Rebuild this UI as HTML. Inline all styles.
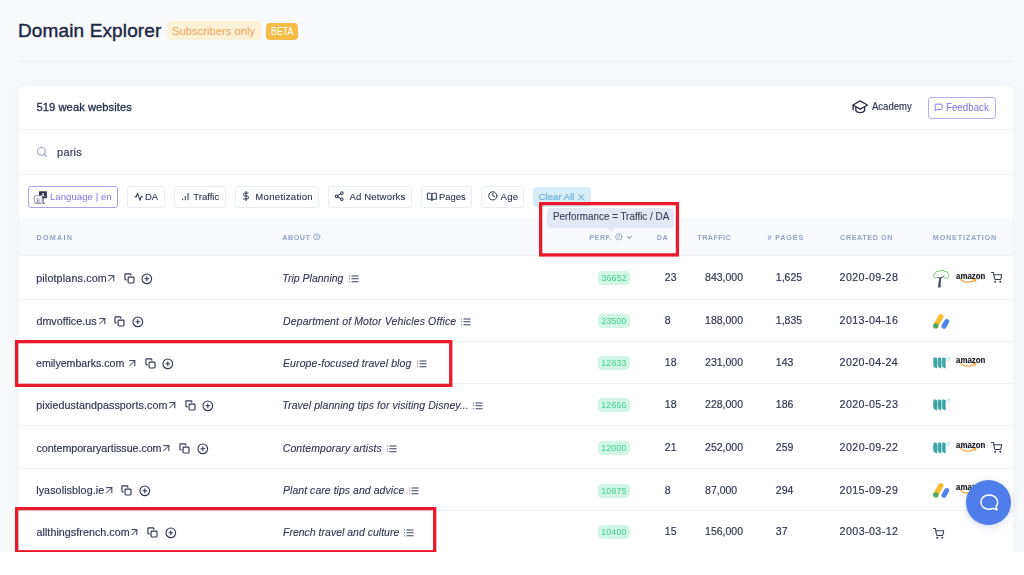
<!DOCTYPE html>
<html lang="en"><head><meta charset="utf-8"><title>Domain Explorer</title>
<style>
html,body{margin:0;padding:0;background:#fff;}
body{width:1024px;height:575px;position:relative;overflow:hidden;font-family:"Liberation Sans",sans-serif;color:#2b3550;}
.t{position:absolute;white-space:nowrap;line-height:1;transform-origin:0 0;}
.s{-webkit-text-stroke:0.17px currentColor;}
.s2{-webkit-text-stroke:0.1px currentColor;}
.b,.i{position:absolute;display:block;}
.i{overflow:visible;}
#w{position:absolute;left:0;top:0;width:1024px;height:575px;overflow:hidden;filter:blur(0.45px);}
</style></head><body><div id="w">
<svg class="i" width="0" height="0" style="left:0;top:0"><defs><linearGradient id="mvg" x1="0" x2="1" y1="0" y2="0"><stop offset="0" stop-color="#62b8b8"/><stop offset="0.6" stop-color="#3aa3a3"/><stop offset="1" stop-color="#2f9a9a"/></linearGradient></defs></svg>
<div class="b" style="left:0.00px;top:0.00px;width:1024.00px;height:552.00px;background:#f9fafc;"></div>
<span class="t" style="left:17.98px;top:21px;font-size:19.00px;letter-spacing:0.132px;color:#1c2745;-webkit-text-stroke:0.42px #1c2745;">Domain Explorer</span>
<div class="b" style="left:166.60px;top:21.00px;width:94.10px;height:19.00px;background:#fdf1d8;border-radius:4px;"></div>
<span class="t" style="left:171.99px;top:26px;font-size:11.50px;transform:scaleX(0.9767);color:#f1a558;">Subscribers only</span>
<div class="b" style="left:265.80px;top:22.90px;width:32.10px;height:17.10px;background:#f4bc49;border-radius:4px;"></div>
<span class="t" style="left:270.59px;top:26px;font-size:10.80px;transform:scaleX(0.8184);color:#ffffff;">BETA</span>
<div class="b" style="left:18.00px;top:60.60px;width:996.00px;height:1.00px;background:#eceff5;"></div>
<div class="b" style="left:19.00px;top:86.00px;width:994.00px;height:474.00px;background:#fff;border-radius:5px 5px 0 0;box-shadow:0 0 12px rgba(150,165,200,.10);"></div>
<span class="t" style="left:36.55px;top:102px;font-size:11.20px;letter-spacing:0.044px;color:#1f2a48;-webkit-text-stroke:0.3px #1f2a48;">519 weak websites</span>
<div class="b" style="left:19.00px;top:129.00px;width:994.00px;height:1.00px;background:#f0f2f8;"></div>
<div class="b" style="left:19.00px;top:173.70px;width:994.00px;height:1.00px;background:#f0f2f8;"></div>
<svg class="i" style="left:852.30px;top:99.90px;" width="16.40" height="14.00" viewBox="0 0 24 20.5"><g fill="none" stroke="#2b3045" stroke-width="2" stroke-linejoin="round" stroke-linecap="round"><path d="M12 1.3 L22.6 7.3 L12 13.3 L1.4 7.3 Z"/><path d="M5.6 10 V15.8 C7.6 19.4 16.4 19.4 18.4 15.8 V10"/><path d="M1.6 7.8 V14.2"/></g></svg>
<span class="t s" style="left:872.40px;top:102px;font-size:10.00px;transform:scaleX(0.9520);color:#30374f;">Academy</span>
<div class="b" style="left:927.70px;top:96.60px;width:68.00px;height:22.00px;border:1px solid #b9adf3;border-radius:3px;background:#fff;box-sizing:border-box;"></div>
<svg class="i" style="left:934.42px;top:103.47px;" width="9.27" height="9.27" viewBox="0 0 24 24"><g fill="none" stroke="#8878e8" stroke-width="2.59" stroke-linecap="round" stroke-linejoin="round"><path d="M21 15a2 2 0 0 1-2 2H7l-4 4V5a2 2 0 0 1 2-2h14a2 2 0 0 1 2 2z"/></g></svg>
<span class="t" style="left:946.22px;top:103px;font-size:10.00px;transform:scaleX(0.9745);color:#7f70e4;">Feedback</span>
<svg class="i" style="left:36.23px;top:146.03px;" width="11.73" height="11.73" viewBox="0 0 24 24"><g fill="none" stroke="#93a4c6" stroke-width="2.25" stroke-linecap="round" stroke-linejoin="round"><circle cx="11" cy="11" r="8"/><line x1="21" y1="21" x2="16.65" y2="16.65"/></g></svg>
<span class="t s" style="left:57.08px;top:147px;font-size:11.00px;letter-spacing:0.208px;color:#333b55;">paris</span>
<div class="b" style="left:28.10px;top:186.00px;width:89.90px;height:22.00px;border:1px solid #ab9ff2;border-radius:3px;background:#fff;box-sizing:border-box;"></div>
<svg class="i" style="left:34.10px;top:190.90px;" width="13.60" height="13.40" viewBox="0 0 27.2 26.8"><rect x="10" y="0.3" width="15.8" height="14" rx="1.4" fill="#30364f"/><path d="M18.4 14v11.2h3.8" stroke="#30364f" stroke-width="1.5" fill="none"/><rect x="0.7" y="9.5" width="15.6" height="15.6" rx="1.6" fill="#fff" stroke="#70768c" stroke-width="1.4"/><text x="17.9" y="11.3" font-size="10.5" font-family="Liberation Sans,sans-serif" font-weight="bold" fill="#fff" text-anchor="middle">A</text><text x="8.5" y="21.6" font-size="10" font-family="Liberation Sans,Noto Sans CJK SC,sans-serif" fill="#4d5369" text-anchor="middle">あ</text></svg>
<span class="t" style="left:49.93px;top:192px;font-size:9.60px;letter-spacing:0.049px;color:#8474e6;">Language | en</span>
<div class="b" style="left:126.60px;top:186.00px;width:38.00px;height:22.00px;border:1px solid #e9edf6;border-radius:3px;background:#fff;box-sizing:border-box;"></div>
<svg class="i" style="left:133.57px;top:191.87px;" width="9.47" height="9.47" viewBox="0 0 24 24"><g fill="none" stroke="#2b3550" stroke-width="2.54" stroke-linecap="round" stroke-linejoin="round"><polyline points="22 12 18 12 15 21 9 3 6 12 2 12"/></g></svg>
<span class="t s2" style="left:145.25px;top:192px;font-size:9.60px;transform:scaleX(0.9818);">DA</span>
<div class="b" style="left:174.10px;top:186.00px;width:51.60px;height:22.00px;border:1px solid #e9edf6;border-radius:3px;background:#fff;box-sizing:border-box;"></div>
<svg class="i" style="left:182.20px;top:192.90px;" width="7.00" height="7.20" viewBox="0 0 7 7.2"><g fill="#59627d"><rect x="0" y="5.4" width="1.2" height="1.8"/><rect x="2.7" y="3" width="1.2" height="4.2"/><rect x="5.4" y="0" width="1.3" height="7.2"/></g></svg>
<span class="t s2" style="left:193.31px;top:192px;font-size:9.60px;letter-spacing:-0.038px;">Traffic</span>
<div class="b" style="left:234.50px;top:186.00px;width:84.20px;height:22.00px;border:1px solid #e9edf6;border-radius:3px;background:#fff;box-sizing:border-box;"></div>
<svg class="i" style="left:241.21px;top:191.46px;" width="10.08" height="10.08" viewBox="0 0 24 24"><g fill="none" stroke="#2b3550" stroke-width="2.38" stroke-linecap="round" stroke-linejoin="round"><line x1="12" y1="1" x2="12" y2="23"/><path d="M17 5H9.5a3.5 3.5 0 0 0 0 7h5a3.5 3.5 0 0 1 0 7H6"/></g></svg>
<span class="t s2" style="left:255.33px;top:192px;font-size:9.60px;letter-spacing:0.269px;">Monetization</span>
<div class="b" style="left:327.70px;top:186.00px;width:84.00px;height:22.00px;border:1px solid #e9edf6;border-radius:3px;background:#fff;box-sizing:border-box;"></div>
<svg class="i" style="left:334.33px;top:191.08px;" width="10.44" height="10.44" viewBox="0 0 24 24"><g fill="none" stroke="#2b3550" stroke-width="2.30" stroke-linecap="round" stroke-linejoin="round"><circle cx="18" cy="5" r="3"/><circle cx="6" cy="12" r="3"/><circle cx="18" cy="19" r="3"/><line x1="8.59" y1="13.51" x2="15.42" y2="17.49"/><line x1="15.41" y1="6.51" x2="8.59" y2="10.49"/></g></svg>
<span class="t s2" style="left:349.40px;top:192px;font-size:9.60px;letter-spacing:0.150px;">Ad Networks</span>
<div class="b" style="left:420.80px;top:186.00px;width:51.10px;height:22.00px;border:1px solid #e9edf6;border-radius:3px;background:#fff;box-sizing:border-box;"></div>
<svg class="i" style="left:427.46px;top:191.81px;" width="9.78" height="9.78" viewBox="0 0 24 24"><g fill="none" stroke="#2b3550" stroke-width="2.45" stroke-linecap="round" stroke-linejoin="round"><path d="M2 3h6a4 4 0 0 1 4 4v14a3 3 0 0 0-3-3H2z"/><path d="M22 3h-6a4 4 0 0 0-4 4v14a3 3 0 0 1 3-3h7z"/></g></svg>
<span class="t s2" style="left:439.45px;top:192px;font-size:9.60px;transform:scaleX(0.9766);">Pages</span>
<div class="b" style="left:481.30px;top:186.00px;width:43.20px;height:22.00px;border:1px solid #e9edf6;border-radius:3px;background:#fff;box-sizing:border-box;"></div>
<svg class="i" style="left:487.96px;top:191.41px;" width="9.78" height="9.78" viewBox="0 0 24 24"><g fill="none" stroke="#2b3550" stroke-width="2.45" stroke-linecap="round" stroke-linejoin="round"><circle cx="12" cy="12" r="10"/><polyline points="12 6 12 12 16 14"/></g></svg>
<span class="t s2" style="left:500.40px;top:192px;font-size:9.60px;letter-spacing:0.372px;">Age</span>
<div class="b" style="left:533.00px;top:187.00px;width:57.80px;height:20.30px;background:#d7eef8;border-radius:4px;"></div>
<span class="t" style="left:538.42px;top:192px;font-size:9.60px;letter-spacing:0.012px;color:#55a8dd;">Clear All</span>
<svg class="i" style="left:575.85px;top:192.40px;" width="10.60" height="10.60" viewBox="0 0 24 24"><g fill="none" stroke="#55a8dd" stroke-width="2.15" stroke-linecap="round" stroke-linejoin="round"><line x1="18" y1="6" x2="6" y2="18"/><line x1="6" y1="6" x2="18" y2="18"/></g></svg>
<div class="b" style="left:19.00px;top:219.00px;width:994.00px;height:36.50px;background:#f9fafd;border-top:1px solid #f3f5fa;box-sizing:border-box;"></div>
<div class="b" style="left:19.00px;top:255.30px;width:994.00px;height:1.00px;background:#eef1f8;"></div>
<span class="t" style="left:36.43px;top:234px;font-size:7.20px;letter-spacing:1.268px;color:#93a2c9;font-weight:bold;">DOMAIN</span>
<span class="t" style="left:282.32px;top:234px;font-size:7.20px;letter-spacing:0.489px;color:#93a2c9;font-weight:bold;">ABOUT</span>
<svg class="i" style="left:312.92px;top:233.22px;" width="7.56" height="7.56" viewBox="0 0 24 24"><g fill="none" stroke="#93a2c9" stroke-width="2.86" stroke-linecap="round" stroke-linejoin="round"><circle cx="12" cy="12" r="10"/><path d="M9.09 9a3 3 0 0 1 5.83 1c0 2-3 3-3 3"/><line x1="12" y1="17" x2="12.01" y2="17"/></g></svg>
<span class="t" style="left:589.23px;top:234px;font-size:7.20px;letter-spacing:0.540px;color:#93a2c9;font-weight:bold;">PERF.</span>
<svg class="i" style="left:614.54px;top:233.19px;" width="7.62" height="7.62" viewBox="0 0 24 24"><g fill="none" stroke="#93a2c9" stroke-width="2.83" stroke-linecap="round" stroke-linejoin="round"><circle cx="12" cy="12" r="10"/><path d="M9.09 9a3 3 0 0 1 5.83 1c0 2-3 3-3 3"/><line x1="12" y1="17" x2="12.01" y2="17"/></g></svg>
<svg class="i" style="left:624.65px;top:232.60px;" width="8.60" height="8.60" viewBox="0 0 24 24"><g fill="none" stroke="#93a2c9" stroke-width="3.07" stroke-linecap="round" stroke-linejoin="round"><polyline points="6 9 12 15 18 9"/></g></svg>
<span class="t" style="left:656.73px;top:234px;font-size:7.20px;letter-spacing:0.680px;color:#93a2c9;font-weight:bold;">DA</span>
<span class="t" style="left:697.33px;top:234px;font-size:7.20px;letter-spacing:0.429px;color:#93a2c9;font-weight:bold;">TRAFFIC</span>
<span class="t" style="left:767.59px;top:234px;font-size:7.20px;letter-spacing:0.831px;color:#93a2c9;font-weight:bold;"># PAGES</span>
<span class="t" style="left:840.11px;top:234px;font-size:7.20px;letter-spacing:0.589px;color:#93a2c9;font-weight:bold;">CREATED ON</span>
<span class="t" style="left:932.83px;top:234px;font-size:7.20px;letter-spacing:0.826px;color:#93a2c9;font-weight:bold;">MONETIZATION</span>
<div class="b" style="left:547.00px;top:208.00px;width:127.20px;height:20.10px;background:#e2e8f5;border-radius:4px;"></div>
<div class="b" style="left:606.5px;top:228px;width:0;height:0;border-left:4px solid transparent;border-right:4px solid transparent;border-top:4.5px solid #e2e8f5;"></div>
<span class="t" style="left:552.51px;top:212px;font-size:10.00px;transform:scaleX(0.9855);color:#3a4258;-webkit-text-stroke:0.12px #3a4258;">Performance = Traffic / DA</span>
<div class="b" style="left:19.00px;top:298.80px;width:994.00px;height:1.00px;background:#f0f2f8;"></div>
<span class="t s" style="left:36.20px;top:273px;font-size:10.70px;letter-spacing:0.166px;color:#2d3550;">pilotplans.com</span>
<svg class="i" style="left:105.46px;top:271.56px;" width="12.48" height="12.48" viewBox="0 0 24 24"><g fill="none" stroke="#2d3550" stroke-width="1.92" stroke-linecap="round" stroke-linejoin="round"><line x1="7" y1="17" x2="17" y2="7"/><polyline points="7 7 17 7 17 17"/></g></svg>
<svg class="i" style="left:123.94px;top:273.49px;" width="10.92" height="10.92" viewBox="0 0 24 24"><g fill="none" stroke="#2f3650" stroke-width="2.53" stroke-linecap="round" stroke-linejoin="round"><rect x="9" y="9" width="13" height="13" rx="2" ry="2"/><path d="M5 15H4a2 2 0 0 1-2-2V4a2 2 0 0 1 2-2h9a2 2 0 0 1 2 2v1"/></g></svg>
<svg class="i" style="left:141.43px;top:273.33px;" width="11.64" height="11.64" viewBox="0 0 24 24"><g fill="none" stroke="#2f3650" stroke-width="2.27" stroke-linecap="round" stroke-linejoin="round"><circle cx="12" cy="12" r="10"/><line x1="12" y1="8" x2="12" y2="16"/><line x1="8" y1="12" x2="16" y2="12"/></g></svg>
<span class="t s2" style="left:282.36px;top:273px;font-size:10.50px;color:#2f3650;font-style:italic;">Trip Planning</span>
<svg class="i" style="left:347.77px;top:272.87px;" width="11.67" height="11.67" viewBox="0 0 24 24"><g fill="none" stroke="#3b4460" stroke-width="2.06" stroke-linecap="round" stroke-linejoin="round"><line x1="8" y1="6" x2="21" y2="6"/><line x1="8" y1="12" x2="21" y2="12"/><line x1="8" y1="18" x2="21" y2="18"/><line x1="3" y1="6" x2="3.01" y2="6"/><line x1="3" y1="12" x2="3.01" y2="12"/><line x1="3" y1="18" x2="3.01" y2="18"/></g></svg>
<div class="b" style="left:597.80px;top:271.20px;width:32.20px;height:13.80px;background:#d2f6e5;border-radius:4.5px;"></div>
<span class="t" style="left:601.50px;top:274px;font-size:8.80px;letter-spacing:0.157px;color:#42d092;">36652</span>
<span class="t s" style="left:664.80px;top:272px;font-size:10.50px;color:#2d3550;">23</span>
<span class="t s" style="left:705.10px;top:272px;font-size:10.50px;color:#2d3550;">843,000</span>
<span class="t s" style="left:775.80px;top:272px;font-size:10.50px;color:#2d3550;">1,625</span>
<span class="t s" style="left:839.57px;top:272px;font-size:10.70px;letter-spacing:0.404px;color:#2d3550;">2020-09-28</span>
<svg class="i" style="left:933.00px;top:269.50px;" width="16.40" height="17.60" viewBox="0 0 16.4 17.6"><path d="M3 8.2 C0.4 8.4 -0.2 5.2 1.8 4.3 C1.4 2 4 0.6 5.8 1.6 C7.4 -0.2 10.6 0.1 11.6 1.6 C13.6 0.9 15.4 2.6 14.8 4.3 C17 5.2 16 8.2 13.6 7.6 C13 8.6 11.6 8.6 11 7.9" fill="none" stroke="#6cc468" stroke-width="0.95" stroke-linecap="round"/><path d="M5 17.4 L7.7 17.4 C7.5 13.6 7.8 10.6 8.5 8.3 C10 7.4 11.5 6.2 12.7 4.7 C11 6 9 6.9 7 7.5 C5.5 7.5 4 7.2 2.9 6.7 C4 7.7 5.3 8.2 6.4 8.4 C5.7 11.2 5.2 14.2 5 17.4 Z" fill="#424a5c"/></svg>
<span class="t" style="left:955.76px;top:272px;font-size:9.30px;transform:scaleX(0.8472);color:#20232a;font-weight:bold;-webkit-text-stroke:0.2px #20232a;">amazon</span>
<svg class="i" style="left:959.60px;top:278.80px;" width="17.00" height="4.40" viewBox="0 0 17 4.4"><path d="M0.6 0.6 C4.5 3.9 10.5 4 15 1.3" fill="none" stroke="#f6a12d" stroke-width="1.15" stroke-linecap="round"/><path d="M13.3 0.5 L16.2 0.5 L15.3 3" fill="none" stroke="#f6a12d" stroke-width="0.9" stroke-linecap="round" stroke-linejoin="round"/></svg>
<svg class="i" style="left:990.82px;top:272.30px;" width="11.16" height="11.16" viewBox="0 0 24 24"><g fill="none" stroke="#343b52" stroke-width="2.26" stroke-linecap="round" stroke-linejoin="round"><circle cx="9" cy="21" r="1"/><circle cx="20" cy="21" r="1"/><path d="M1 1h4l2.68 13.39a2 2 0 0 0 2 1.61h9.72a2 2 0 0 0 2-1.61L23 6H6"/></g></svg>
<div class="b" style="left:19.00px;top:341.00px;width:994.00px;height:1.00px;background:#f0f2f8;"></div>
<span class="t s" style="left:36.47px;top:316px;font-size:10.70px;letter-spacing:0.021px;color:#2d3550;">dmvoffice.us</span>
<svg class="i" style="left:95.56px;top:314.56px;" width="12.48" height="12.48" viewBox="0 0 24 24"><g fill="none" stroke="#2d3550" stroke-width="1.92" stroke-linecap="round" stroke-linejoin="round"><line x1="7" y1="17" x2="17" y2="7"/><polyline points="7 7 17 7 17 17"/></g></svg>
<svg class="i" style="left:114.24px;top:316.49px;" width="10.92" height="10.92" viewBox="0 0 24 24"><g fill="none" stroke="#2f3650" stroke-width="2.53" stroke-linecap="round" stroke-linejoin="round"><rect x="9" y="9" width="13" height="13" rx="2" ry="2"/><path d="M5 15H4a2 2 0 0 1-2-2V4a2 2 0 0 1 2-2h9a2 2 0 0 1 2 2v1"/></g></svg>
<svg class="i" style="left:131.53px;top:316.33px;" width="11.64" height="11.64" viewBox="0 0 24 24"><g fill="none" stroke="#2f3650" stroke-width="2.27" stroke-linecap="round" stroke-linejoin="round"><circle cx="12" cy="12" r="10"/><line x1="12" y1="8" x2="12" y2="16"/><line x1="8" y1="12" x2="16" y2="12"/></g></svg>
<span class="t s2" style="left:282.99px;top:316px;font-size:10.50px;letter-spacing:0.128px;color:#2f3650;font-style:italic;">Department of Motor Vehicles Office</span>
<svg class="i" style="left:459.67px;top:315.87px;" width="11.67" height="11.67" viewBox="0 0 24 24"><g fill="none" stroke="#3b4460" stroke-width="2.06" stroke-linecap="round" stroke-linejoin="round"><line x1="8" y1="6" x2="21" y2="6"/><line x1="8" y1="12" x2="21" y2="12"/><line x1="8" y1="18" x2="21" y2="18"/><line x1="3" y1="6" x2="3.01" y2="6"/><line x1="3" y1="12" x2="3.01" y2="12"/><line x1="3" y1="18" x2="3.01" y2="18"/></g></svg>
<div class="b" style="left:597.80px;top:314.20px;width:32.20px;height:13.80px;background:#d2f6e5;border-radius:4.5px;"></div>
<span class="t" style="left:601.41px;top:317px;font-size:8.80px;letter-spacing:0.146px;color:#42d092;">23500</span>
<span class="t s" style="left:664.80px;top:315px;font-size:10.50px;color:#2d3550;">8</span>
<span class="t s" style="left:705.10px;top:315px;font-size:10.50px;color:#2d3550;">188,000</span>
<span class="t s" style="left:775.80px;top:315px;font-size:10.50px;color:#2d3550;">1,835</span>
<span class="t s" style="left:839.57px;top:315px;font-size:10.70px;letter-spacing:0.404px;color:#2d3550;">2013-04-16</span>
<svg class="i" style="left:932.90px;top:313.70px;" width="16.40" height="15.00" viewBox="0 0 16.4 15"><line x1="7.9" y1="2.6" x2="3.3" y2="10.6" stroke="#f8bd2d" stroke-width="5.1" stroke-linecap="round"/><line x1="13.7" y1="7.5" x2="11" y2="12.3" stroke="#4f86ec" stroke-width="5" stroke-linecap="round"/><circle cx="2.8" cy="11.9" r="2.7" fill="#52a95a"/></svg>
<div class="b" style="left:19.00px;top:383.10px;width:994.00px;height:1.00px;background:#f0f2f8;"></div>
<span class="t s" style="left:36.48px;top:358px;font-size:10.70px;transform:scaleX(0.9902);color:#2d3550;">emilyembarks.com</span>
<svg class="i" style="left:125.66px;top:356.56px;" width="12.48" height="12.48" viewBox="0 0 24 24"><g fill="none" stroke="#2d3550" stroke-width="1.92" stroke-linecap="round" stroke-linejoin="round"><line x1="7" y1="17" x2="17" y2="7"/><polyline points="7 7 17 7 17 17"/></g></svg>
<svg class="i" style="left:144.54px;top:358.49px;" width="10.92" height="10.92" viewBox="0 0 24 24"><g fill="none" stroke="#2f3650" stroke-width="2.53" stroke-linecap="round" stroke-linejoin="round"><rect x="9" y="9" width="13" height="13" rx="2" ry="2"/><path d="M5 15H4a2 2 0 0 1-2-2V4a2 2 0 0 1 2-2h9a2 2 0 0 1 2 2v1"/></g></svg>
<svg class="i" style="left:161.93px;top:358.33px;" width="11.64" height="11.64" viewBox="0 0 24 24"><g fill="none" stroke="#2f3650" stroke-width="2.27" stroke-linecap="round" stroke-linejoin="round"><circle cx="12" cy="12" r="10"/><line x1="12" y1="8" x2="12" y2="16"/><line x1="8" y1="12" x2="16" y2="12"/></g></svg>
<span class="t s2" style="left:282.99px;top:358px;font-size:10.50px;letter-spacing:0.114px;color:#2f3650;font-style:italic;">Europe-focused travel blog</span>
<svg class="i" style="left:415.57px;top:357.87px;" width="11.67" height="11.67" viewBox="0 0 24 24"><g fill="none" stroke="#3b4460" stroke-width="2.06" stroke-linecap="round" stroke-linejoin="round"><line x1="8" y1="6" x2="21" y2="6"/><line x1="8" y1="12" x2="21" y2="12"/><line x1="8" y1="18" x2="21" y2="18"/><line x1="3" y1="6" x2="3.01" y2="6"/><line x1="3" y1="12" x2="3.01" y2="12"/><line x1="3" y1="18" x2="3.01" y2="18"/></g></svg>
<div class="b" style="left:597.80px;top:356.20px;width:32.20px;height:13.80px;background:#d2f6e5;border-radius:4.5px;"></div>
<span class="t" style="left:601.19px;top:359px;font-size:8.80px;letter-spacing:0.212px;color:#42d092;">12833</span>
<span class="t s" style="left:664.80px;top:357px;font-size:10.50px;color:#2d3550;">18</span>
<span class="t s" style="left:705.10px;top:357px;font-size:10.50px;color:#2d3550;">231,000</span>
<span class="t s" style="left:775.80px;top:357px;font-size:10.50px;color:#2d3550;">143</span>
<span class="t s" style="left:839.57px;top:357px;font-size:10.70px;letter-spacing:0.392px;color:#2d3550;">2020-04-24</span>
<svg class="i" style="left:932.70px;top:356.90px;" width="17.10" height="11.50" viewBox="0 0 17.1 11.5"><path d="M1.00 0.2 C-0.35 2.6 -0.35 7.4 0.70 9.9 L3.95 11.4 L3.95 0.9 Z" fill="url(#mvg)"/><path d="M5.30 0.2 C3.95 2.6 3.95 7.4 5.00 9.9 L8.25 11.4 L8.25 0.9 Z" fill="url(#mvg)"/><path d="M9.60 0.2 C8.25 2.6 8.25 7.4 9.30 9.9 L12.55 11.4 L12.55 0.9 Z" fill="url(#mvg)"/><ellipse cx="15.4" cy="1.9" rx="1.3" ry="1.7" transform="rotate(28 15.4 1.9)" fill="none" stroke="#86c6d2" stroke-width="0.65"/></svg>
<span class="t" style="left:955.76px;top:356px;font-size:9.30px;transform:scaleX(0.8472);color:#20232a;font-weight:bold;-webkit-text-stroke:0.2px #20232a;">amazon</span>
<svg class="i" style="left:959.60px;top:362.80px;" width="17.00" height="4.40" viewBox="0 0 17 4.4"><path d="M0.6 0.6 C4.5 3.9 10.5 4 15 1.3" fill="none" stroke="#f6a12d" stroke-width="1.15" stroke-linecap="round"/><path d="M13.3 0.5 L16.2 0.5 L15.3 3" fill="none" stroke="#f6a12d" stroke-width="0.9" stroke-linecap="round" stroke-linejoin="round"/></svg>
<div class="b" style="left:19.00px;top:424.80px;width:994.00px;height:1.00px;background:#f0f2f8;"></div>
<span class="t s" style="left:36.20px;top:400px;font-size:10.70px;letter-spacing:0.067px;color:#2d3550;">pixiedustandpassports.com</span>
<svg class="i" style="left:165.86px;top:398.56px;" width="12.48" height="12.48" viewBox="0 0 24 24"><g fill="none" stroke="#2d3550" stroke-width="1.92" stroke-linecap="round" stroke-linejoin="round"><line x1="7" y1="17" x2="17" y2="7"/><polyline points="7 7 17 7 17 17"/></g></svg>
<svg class="i" style="left:184.64px;top:400.49px;" width="10.92" height="10.92" viewBox="0 0 24 24"><g fill="none" stroke="#2f3650" stroke-width="2.53" stroke-linecap="round" stroke-linejoin="round"><rect x="9" y="9" width="13" height="13" rx="2" ry="2"/><path d="M5 15H4a2 2 0 0 1-2-2V4a2 2 0 0 1 2-2h9a2 2 0 0 1 2 2v1"/></g></svg>
<svg class="i" style="left:201.93px;top:400.33px;" width="11.64" height="11.64" viewBox="0 0 24 24"><g fill="none" stroke="#2f3650" stroke-width="2.27" stroke-linecap="round" stroke-linejoin="round"><circle cx="12" cy="12" r="10"/><line x1="12" y1="8" x2="12" y2="16"/><line x1="8" y1="12" x2="16" y2="12"/></g></svg>
<span class="t s2" style="left:282.36px;top:400px;font-size:10.50px;letter-spacing:0.071px;color:#2f3650;font-style:italic;">Travel planning tips for visiting Disney...</span>
<svg class="i" style="left:471.97px;top:399.87px;" width="11.67" height="11.67" viewBox="0 0 24 24"><g fill="none" stroke="#3b4460" stroke-width="2.06" stroke-linecap="round" stroke-linejoin="round"><line x1="8" y1="6" x2="21" y2="6"/><line x1="8" y1="12" x2="21" y2="12"/><line x1="8" y1="18" x2="21" y2="18"/><line x1="3" y1="6" x2="3.01" y2="6"/><line x1="3" y1="12" x2="3.01" y2="12"/><line x1="3" y1="18" x2="3.01" y2="18"/></g></svg>
<div class="b" style="left:597.80px;top:398.20px;width:32.20px;height:13.80px;background:#d2f6e5;border-radius:4.5px;"></div>
<span class="t" style="left:601.19px;top:401px;font-size:8.80px;letter-spacing:0.212px;color:#42d092;">12666</span>
<span class="t s" style="left:664.80px;top:399px;font-size:10.50px;color:#2d3550;">18</span>
<span class="t s" style="left:705.10px;top:399px;font-size:10.50px;color:#2d3550;">228,000</span>
<span class="t s" style="left:775.80px;top:399px;font-size:10.50px;color:#2d3550;">186</span>
<span class="t s" style="left:839.57px;top:399px;font-size:10.70px;letter-spacing:0.404px;color:#2d3550;">2020-05-23</span>
<svg class="i" style="left:932.70px;top:398.80px;" width="17.10" height="11.50" viewBox="0 0 17.1 11.5"><path d="M1.00 0.2 C-0.35 2.6 -0.35 7.4 0.70 9.9 L3.95 11.4 L3.95 0.9 Z" fill="url(#mvg)"/><path d="M5.30 0.2 C3.95 2.6 3.95 7.4 5.00 9.9 L8.25 11.4 L8.25 0.9 Z" fill="url(#mvg)"/><path d="M9.60 0.2 C8.25 2.6 8.25 7.4 9.30 9.9 L12.55 11.4 L12.55 0.9 Z" fill="url(#mvg)"/><ellipse cx="15.4" cy="1.9" rx="1.3" ry="1.7" transform="rotate(28 15.4 1.9)" fill="none" stroke="#86c6d2" stroke-width="0.65"/></svg>
<div class="b" style="left:19.00px;top:467.90px;width:994.00px;height:1.00px;background:#f0f2f8;"></div>
<span class="t s" style="left:36.47px;top:443px;font-size:10.70px;letter-spacing:-0.038px;color:#2d3550;">contemporaryartissue.com</span>
<svg class="i" style="left:160.16px;top:441.56px;" width="12.48" height="12.48" viewBox="0 0 24 24"><g fill="none" stroke="#2d3550" stroke-width="1.92" stroke-linecap="round" stroke-linejoin="round"><line x1="7" y1="17" x2="17" y2="7"/><polyline points="7 7 17 7 17 17"/></g></svg>
<svg class="i" style="left:179.24px;top:443.49px;" width="10.92" height="10.92" viewBox="0 0 24 24"><g fill="none" stroke="#2f3650" stroke-width="2.53" stroke-linecap="round" stroke-linejoin="round"><rect x="9" y="9" width="13" height="13" rx="2" ry="2"/><path d="M5 15H4a2 2 0 0 1-2-2V4a2 2 0 0 1 2-2h9a2 2 0 0 1 2 2v1"/></g></svg>
<svg class="i" style="left:196.63px;top:443.33px;" width="11.64" height="11.64" viewBox="0 0 24 24"><g fill="none" stroke="#2f3650" stroke-width="2.27" stroke-linecap="round" stroke-linejoin="round"><circle cx="12" cy="12" r="10"/><line x1="12" y1="8" x2="12" y2="16"/><line x1="8" y1="12" x2="16" y2="12"/></g></svg>
<span class="t s2" style="left:282.72px;top:443px;font-size:10.50px;letter-spacing:0.081px;color:#2f3650;font-style:italic;">Contemporary artists</span>
<svg class="i" style="left:385.77px;top:442.87px;" width="11.67" height="11.67" viewBox="0 0 24 24"><g fill="none" stroke="#3b4460" stroke-width="2.06" stroke-linecap="round" stroke-linejoin="round"><line x1="8" y1="6" x2="21" y2="6"/><line x1="8" y1="12" x2="21" y2="12"/><line x1="8" y1="18" x2="21" y2="18"/><line x1="3" y1="6" x2="3.01" y2="6"/><line x1="3" y1="12" x2="3.01" y2="12"/><line x1="3" y1="18" x2="3.01" y2="18"/></g></svg>
<div class="b" style="left:597.80px;top:441.20px;width:32.20px;height:13.80px;background:#d2f6e5;border-radius:4.5px;"></div>
<span class="t" style="left:601.19px;top:444px;font-size:8.80px;letter-spacing:0.201px;color:#42d092;">12000</span>
<span class="t s" style="left:664.80px;top:442px;font-size:10.50px;color:#2d3550;">21</span>
<span class="t s" style="left:705.10px;top:442px;font-size:10.50px;color:#2d3550;">252,000</span>
<span class="t s" style="left:775.80px;top:442px;font-size:10.50px;color:#2d3550;">259</span>
<span class="t s" style="left:839.57px;top:442px;font-size:10.70px;letter-spacing:0.415px;color:#2d3550;">2020-09-22</span>
<svg class="i" style="left:932.70px;top:441.80px;" width="17.10" height="11.50" viewBox="0 0 17.1 11.5"><path d="M1.00 0.2 C-0.35 2.6 -0.35 7.4 0.70 9.9 L3.95 11.4 L3.95 0.9 Z" fill="url(#mvg)"/><path d="M5.30 0.2 C3.95 2.6 3.95 7.4 5.00 9.9 L8.25 11.4 L8.25 0.9 Z" fill="url(#mvg)"/><path d="M9.60 0.2 C8.25 2.6 8.25 7.4 9.30 9.9 L12.55 11.4 L12.55 0.9 Z" fill="url(#mvg)"/><ellipse cx="15.4" cy="1.9" rx="1.3" ry="1.7" transform="rotate(28 15.4 1.9)" fill="none" stroke="#86c6d2" stroke-width="0.65"/></svg>
<span class="t" style="left:955.76px;top:441px;font-size:9.30px;transform:scaleX(0.8472);color:#20232a;font-weight:bold;-webkit-text-stroke:0.2px #20232a;">amazon</span>
<svg class="i" style="left:959.60px;top:447.80px;" width="17.00" height="4.40" viewBox="0 0 17 4.4"><path d="M0.6 0.6 C4.5 3.9 10.5 4 15 1.3" fill="none" stroke="#f6a12d" stroke-width="1.15" stroke-linecap="round"/><path d="M13.3 0.5 L16.2 0.5 L15.3 3" fill="none" stroke="#f6a12d" stroke-width="0.9" stroke-linecap="round" stroke-linejoin="round"/></svg>
<svg class="i" style="left:990.82px;top:442.30px;" width="11.16" height="11.16" viewBox="0 0 24 24"><g fill="none" stroke="#343b52" stroke-width="2.26" stroke-linecap="round" stroke-linejoin="round"><circle cx="9" cy="21" r="1"/><circle cx="20" cy="21" r="1"/><path d="M1 1h4l2.68 13.39a2 2 0 0 0 2 1.61h9.72a2 2 0 0 0 2-1.61L23 6H6"/></g></svg>
<div class="b" style="left:19.00px;top:509.80px;width:994.00px;height:1.00px;background:#f0f2f8;"></div>
<span class="t s" style="left:36.20px;top:485px;font-size:10.70px;letter-spacing:0.105px;color:#2d3550;">lyasolisblog.ie</span>
<svg class="i" style="left:102.76px;top:483.56px;" width="12.48" height="12.48" viewBox="0 0 24 24"><g fill="none" stroke="#2d3550" stroke-width="1.92" stroke-linecap="round" stroke-linejoin="round"><line x1="7" y1="17" x2="17" y2="7"/><polyline points="7 7 17 7 17 17"/></g></svg>
<svg class="i" style="left:121.24px;top:485.49px;" width="10.92" height="10.92" viewBox="0 0 24 24"><g fill="none" stroke="#2f3650" stroke-width="2.53" stroke-linecap="round" stroke-linejoin="round"><rect x="9" y="9" width="13" height="13" rx="2" ry="2"/><path d="M5 15H4a2 2 0 0 1-2-2V4a2 2 0 0 1 2-2h9a2 2 0 0 1 2 2v1"/></g></svg>
<svg class="i" style="left:138.53px;top:485.33px;" width="11.64" height="11.64" viewBox="0 0 24 24"><g fill="none" stroke="#2f3650" stroke-width="2.27" stroke-linecap="round" stroke-linejoin="round"><circle cx="12" cy="12" r="10"/><line x1="12" y1="8" x2="12" y2="16"/><line x1="8" y1="12" x2="16" y2="12"/></g></svg>
<span class="t s2" style="left:282.99px;top:485px;font-size:10.50px;letter-spacing:0.042px;color:#2f3650;font-style:italic;">Plant care tips and advice</span>
<svg class="i" style="left:408.37px;top:484.87px;" width="11.67" height="11.67" viewBox="0 0 24 24"><g fill="none" stroke="#3b4460" stroke-width="2.06" stroke-linecap="round" stroke-linejoin="round"><line x1="8" y1="6" x2="21" y2="6"/><line x1="8" y1="12" x2="21" y2="12"/><line x1="8" y1="18" x2="21" y2="18"/><line x1="3" y1="6" x2="3.01" y2="6"/><line x1="3" y1="12" x2="3.01" y2="12"/><line x1="3" y1="18" x2="3.01" y2="18"/></g></svg>
<div class="b" style="left:597.80px;top:484.20px;width:32.20px;height:13.80px;background:#d2f6e5;border-radius:4.5px;"></div>
<span class="t" style="left:601.19px;top:487px;font-size:8.80px;letter-spacing:0.212px;color:#42d092;">10875</span>
<span class="t s" style="left:664.80px;top:485px;font-size:10.50px;color:#2d3550;">8</span>
<span class="t s" style="left:705.10px;top:485px;font-size:10.50px;color:#2d3550;">87,000</span>
<span class="t s" style="left:775.80px;top:485px;font-size:10.50px;color:#2d3550;">294</span>
<span class="t s" style="left:839.57px;top:485px;font-size:10.70px;letter-spacing:0.410px;color:#2d3550;">2015-09-29</span>
<svg class="i" style="left:932.90px;top:483.30px;" width="16.40" height="15.00" viewBox="0 0 16.4 15"><line x1="7.9" y1="2.6" x2="3.3" y2="10.6" stroke="#f8bd2d" stroke-width="5.1" stroke-linecap="round"/><line x1="13.7" y1="7.5" x2="11" y2="12.3" stroke="#4f86ec" stroke-width="5" stroke-linecap="round"/><circle cx="2.8" cy="11.9" r="2.7" fill="#52a95a"/></svg>
<span class="t" style="left:955.76px;top:483px;font-size:9.30px;transform:scaleX(0.8472);color:#20232a;font-weight:bold;-webkit-text-stroke:0.2px #20232a;">amazon</span>
<svg class="i" style="left:959.60px;top:489.80px;" width="17.00" height="4.40" viewBox="0 0 17 4.4"><path d="M0.6 0.6 C4.5 3.9 10.5 4 15 1.3" fill="none" stroke="#f6a12d" stroke-width="1.15" stroke-linecap="round"/><path d="M13.3 0.5 L16.2 0.5 L15.3 3" fill="none" stroke="#f6a12d" stroke-width="0.9" stroke-linecap="round" stroke-linejoin="round"/></svg>
<span class="t s" style="left:36.47px;top:527px;font-size:10.70px;letter-spacing:0.063px;color:#2d3550;">allthingsfrench.com</span>
<svg class="i" style="left:128.36px;top:525.56px;" width="12.48" height="12.48" viewBox="0 0 24 24"><g fill="none" stroke="#2d3550" stroke-width="1.92" stroke-linecap="round" stroke-linejoin="round"><line x1="7" y1="17" x2="17" y2="7"/><polyline points="7 7 17 7 17 17"/></g></svg>
<svg class="i" style="left:147.04px;top:527.49px;" width="10.92" height="10.92" viewBox="0 0 24 24"><g fill="none" stroke="#2f3650" stroke-width="2.53" stroke-linecap="round" stroke-linejoin="round"><rect x="9" y="9" width="13" height="13" rx="2" ry="2"/><path d="M5 15H4a2 2 0 0 1-2-2V4a2 2 0 0 1 2-2h9a2 2 0 0 1 2 2v1"/></g></svg>
<svg class="i" style="left:164.63px;top:527.33px;" width="11.64" height="11.64" viewBox="0 0 24 24"><g fill="none" stroke="#2f3650" stroke-width="2.27" stroke-linecap="round" stroke-linejoin="round"><circle cx="12" cy="12" r="10"/><line x1="12" y1="8" x2="12" y2="16"/><line x1="8" y1="12" x2="16" y2="12"/></g></svg>
<span class="t s2" style="left:282.99px;top:527px;font-size:10.50px;letter-spacing:0.006px;color:#2f3650;font-style:italic;">French travel and culture</span>
<svg class="i" style="left:403.27px;top:526.87px;" width="11.67" height="11.67" viewBox="0 0 24 24"><g fill="none" stroke="#3b4460" stroke-width="2.06" stroke-linecap="round" stroke-linejoin="round"><line x1="8" y1="6" x2="21" y2="6"/><line x1="8" y1="12" x2="21" y2="12"/><line x1="8" y1="18" x2="21" y2="18"/><line x1="3" y1="6" x2="3.01" y2="6"/><line x1="3" y1="12" x2="3.01" y2="12"/><line x1="3" y1="18" x2="3.01" y2="18"/></g></svg>
<div class="b" style="left:597.80px;top:525.20px;width:32.20px;height:13.80px;background:#d2f6e5;border-radius:4.5px;"></div>
<span class="t" style="left:601.19px;top:528px;font-size:8.80px;letter-spacing:0.201px;color:#42d092;">10400</span>
<span class="t s" style="left:664.80px;top:526px;font-size:10.50px;color:#2d3550;">15</span>
<span class="t s" style="left:705.10px;top:526px;font-size:10.50px;color:#2d3550;">156,000</span>
<span class="t s" style="left:775.80px;top:526px;font-size:10.50px;color:#2d3550;">37</span>
<span class="t s" style="left:839.57px;top:526px;font-size:10.70px;letter-spacing:0.415px;color:#2d3550;">2003-03-12</span>
<svg class="i" style="left:933.22px;top:528.10px;" width="11.16" height="11.16" viewBox="0 0 24 24"><g fill="none" stroke="#343b52" stroke-width="2.26" stroke-linecap="round" stroke-linejoin="round"><circle cx="9" cy="21" r="1"/><circle cx="20" cy="21" r="1"/><path d="M1 1h4l2.68 13.39a2 2 0 0 0 2 1.61h9.72a2 2 0 0 0 2-1.61L23 6H6"/></g></svg>
<div class="b" style="left:966.20px;top:479.70px;width:44.90px;height:44.90px;background:#4f7de9;border-radius:50%;box-shadow:0 2px 7px rgba(60,90,180,.22);"></div>
<svg class="i" style="left:978.60px;top:493.20px;" width="20.00" height="19.00" viewBox="0 0 20 19"><path d="M10 2 C5 2 2 5.2 2 9.2 C2 13.3 5.2 16.3 10 16.3 C11.6 16.3 12.9 16 14.1 15.4 L17.9 16.9 L17.1 13.5 C18.2 12.3 18.6 10.8 18.6 9.2 C18.6 5.2 15.2 2 10 2 Z" fill="none" stroke="#fff" stroke-width="1.5" stroke-linejoin="round"/></svg>
<svg class="i" style="left:538.90px;top:202.30px;" width="140.10" height="54.60" viewBox="0 0 140.10 54.60"><rect x="1.65" y="1.65" width="136.80" height="51.30" fill="none" stroke="#e81a2c" stroke-width="3.30"/></svg>
<svg class="i" style="left:14.90px;top:339.80px;" width="437.40" height="47.00" viewBox="0 0 437.40 47.00"><rect x="1.65" y="1.65" width="434.10" height="43.70" fill="none" stroke="#e81a2c" stroke-width="3.30"/></svg>
<svg class="i" style="left:14.90px;top:506.90px;" width="421.40" height="46.40" viewBox="0 0 421.40 46.40"><rect x="1.65" y="1.65" width="418.10" height="43.10" fill="none" stroke="#e81a2c" stroke-width="3.30"/></svg>
<div class="b" style="left:0.00px;top:552.00px;width:1024.00px;height:23.00px;background:#fff;"></div>
</div></body></html>
